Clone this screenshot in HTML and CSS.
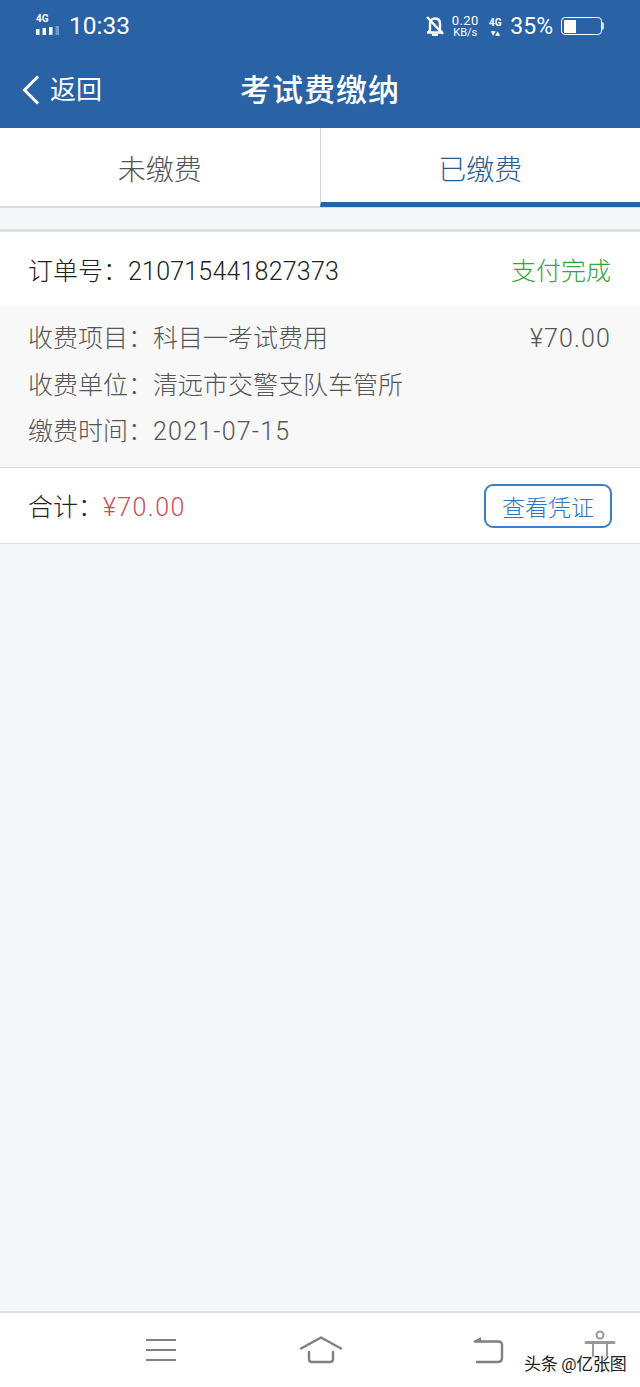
FILE: index.html
```html
<!DOCTYPE html>
<html>
<head>
<meta charset="utf-8">
<link rel="stylesheet" href="styles.css">
</head>
<body>
<div class="page">
	<div class="top">
		<div class="status">
			<div class="signal">
				<span class="net">4G</span>
				<svg class="bars" width="24" height="10" viewBox="0 0 24 10">
					<rect x="0" y="3" width="3.500" height="6" fill="#fff"/>
					<rect x="6.500" y="2" width="3.500" height="7" fill="#fff"/>
					<rect x="13" y="1" width="3.500" height="8" fill="#fff"/>
					<rect x="19.500" y="0" width="3.500" height="9" fill="#6f9bcf"/>
				</svg>
			</div>
			<span class="clock">10:33</span>
			<div class="spacer"></div>
			<svg class="bell" width="20" height="22" viewBox="0 0 20 22">
				<path d="M5 15V8.500C5 5.500 7 3.500 10 3.500S15 5.500 15 8.500V15L17 17.500H3Z" fill="none" stroke="#fff" stroke-width="2.400" stroke-linejoin="round"/>
				<path d="M8 19.800H12" stroke="#fff" stroke-width="2.400" stroke-linecap="round"/>
				<path d="M2 2L18 19" stroke="#fff" stroke-width="2.400"/>
			</svg>
			<div class="speed"><span>0.20</span><span class="unit">KB/s</span></div>
			<div class="net2"><span>4G</span><span class="arrows">▼▲</span></div>
			<span class="percent">35%</span>
			<div class="battery"><div class="level"></div></div>
			<div class="nub"></div>
		</div>
		<div class="navbar">
			<svg class="back" width="20" height="32" viewBox="0 0 20 32">
				<path d="M17 2.500L3.500 16L17 29.500" fill="none" stroke="#fff" stroke-width="3"/>
			</svg>
			<span class="back-text">返回</span>
			<span class="title">考试费缴纳</span>
		</div>
	</div>

	<div class="tabs">
		<div class="tab">未缴费</div>
		<div class="tab active">已缴费</div>
	</div>

	<div class="order">
		<div class="row head">
			<span>订单号：<span class="order-no">210715441827373</span></span>
			<span class="done">支付完成</span>
		</div>
		<div class="detail">
			<div class="line"><span>收费项目：科目一考试费用</span><span class="num">¥70.00</span></div>
			<div class="line"><span>收费单位：清远市交警支队车管所</span></div>
			<div class="line"><span>缴费时间：<span class="num date">2021-07-15</span></span></div>
		</div>
		<div class="row total">
			<span>合计：<span class="money num">¥70.00</span></span>
			<div class="btn">查看凭证</div>
		</div>
	</div>

	<div class="fill"></div>

	<div class="bottom">
		<svg class="menu-ic" width="32" height="26" viewBox="0 0 32 26">
			<path d="M1 3H31M1 13H31M1 23H31" stroke="#808080" stroke-width="2.200"/>
		</svg>
		<svg class="home-ic" width="44" height="28" viewBox="0 0 44 28">
			<path d="M2 12.500L22 1.500L42 12.500" fill="none" stroke="#808080" stroke-width="2.400" stroke-linecap="round" stroke-linejoin="round"/>
			<path d="M10 16V23C10 25 11 26 13 26H31C33 26 34 25 34 23V16" fill="none" stroke="#808080" stroke-width="2.400" stroke-linecap="round"/>
		</svg>
		<svg class="back-ic" width="32" height="28" viewBox="0 0 32 28">
			<path d="M3 5.500H26C29 5.500 30 6.500 30 9V22C30 25 29 26 26 26H5" fill="none" stroke="#808080" stroke-width="2.400" stroke-linecap="round"/>
			<path d="M1 5.500L9 1V6Z" fill="#808080"/>
		</svg>
		<svg class="man-ic" width="32" height="36" viewBox="0 0 32 36">
			<circle cx="16" cy="5" r="3.500" fill="none" stroke="#999" stroke-width="2"/>
			<path d="M2 12.500H30" stroke="#999" stroke-width="3" stroke-linecap="round"/>
			<path d="M9 14V27M23 14V27" stroke="#999" stroke-width="2"/>
		</svg>
		<span class="mark">头条 @亿张图</span>
	</div>
</div>
</body>
</html>
```

FILE: styles.css
```css
* {
	box-sizing: border-box;
}

html, body {
	margin: 0;
	padding: 0;
}

body {
	font-family: "Roboto", "Noto Sans CJK SC", sans-serif;
	font-weight: 300;
	background: #f4f8f9;
}

.page {
	position: relative;
	width: 640px;
	height: 1387px;
	display: flex;
	flex-direction: column;
	overflow: hidden;
}

.top {
	height: 128px;
	background: #2a62a6;
	color: #fff;
}

.status {
	height: 52px;
	padding: 0 36px 0 36px;
	display: flex;
	align-items: center;
}

.signal {
	width: 26px;
	height: 24px;
	display: flex;
	flex-direction: column;
	margin-top: -3px;
}

.net {
	font-size: 10px;
	font-weight: 700;
	line-height: 11px;
}

.bars {
	margin-top: 2px;
}

.clock {
	margin-left: 7px;
	font-size: 24.500px;
	font-weight: 400;
	line-height: 28px;
}

.spacer {
	flex: 1;
}

.bell {
	margin-right: 5px;
}

.speed {
	width: 30px;
	display: flex;
	flex-direction: column;
	align-items: center;
	font-size: 13px;
	font-weight: 400;
	letter-spacing: 0.400px;
	line-height: 12px;
	margin-right: 7px;
}

.unit {
	font-size: 11px;
	letter-spacing: 0;
	line-height: 11px;
}

.net2 {
	width: 16px;
	display: flex;
	flex-direction: column;
	align-items: center;
	font-size: 10px;
	font-weight: 700;
	line-height: 12px;
	margin-right: 7px;
}

.arrows {
	font-family: "DejaVu Sans", sans-serif;
	font-size: 6px;
	line-height: 7px;
	white-space: nowrap;
}

.percent {
	font-size: 23px;
	font-weight: 400;
	margin-right: 8px;
}

.battery {
	width: 41px;
	height: 18px;
	border: 1.500px solid #fff;
	border-radius: 4px;
	padding: 1.500px;
}

.level {
	width: 12px;
	height: 100%;
	background: #fff;
}

.nub {
	width: 2px;
	height: 8px;
	background: #cfdcec;
	border-radius: 0 2px 2px 0;
}

.navbar {
	position: relative;
	height: 76px;
	padding: 0 0 0 21px;
	display: flex;
	align-items: center;
}

.back {
	margin-top: -1px;
}

.back-text {
	margin-left: 9px;
	font-size: 26px;
	font-weight: 400;
	line-height: 30px;
}

.title {
	position: absolute;
	left: 0;
	right: 0;
	top: 21px;
	text-align: center;
	font-size: 31px;
	line-height: 36px;
	letter-spacing: 1px;
	font-weight: 500;
}

.tabs {
	height: 80px;
	display: flex;
	background: #fff;
	border-bottom: 2px solid #d9dcdd;
}

.tab {
	flex: 1;
	display: flex;
	align-items: center;
	justify-content: center;
	padding-top: 2px;
	font-size: 28px;
	color: #555;
}

.tab.active {
	margin-bottom: -1px;
	padding-top: 5px;
	border-left: 1px solid #d4d4d4;
	border-bottom: 5px solid #2a62a6;
	color: #2a5c96;
}

.order {
	margin-top: 21px;
	border-top: 3px solid #dfe3e6;
	border-bottom: 1px solid #dcdcdc;
	background: #fff;
}

.row {
	display: flex;
	align-items: center;
	justify-content: space-between;
	padding: 0 29px 0 28px;
	font-size: 25px;
	color: #222;
}

.head {
	height: 74px;
}

.order-no {
	letter-spacing: 0.200px;
}

.done {
	color: #2fa53b;
}

.detail {
	height: 162px;
	padding: 10px 29px 0 28px;
	background: #f8f8f8;
	border-bottom: 1px solid #d9d9d9;
	color: #555;
	font-size: 25px;
}

.line {
	height: 46.500px;
	line-height: 46px;
	display: flex;
	align-items: baseline;
	justify-content: space-between;
}

.num {
	letter-spacing: 1.100px;
}

.date {
	letter-spacing: 1.200px;
}

.total {
	height: 75px;
	padding-bottom: 2px;
}

.money {
	color: #cf4c52;
	letter-spacing: 1.400px;
}

.btn {
	width: 128px;
	height: 44px;
	margin-right: -1px;
	margin-bottom: -2px;
	border: 2px solid #3a7fc4;
	border-radius: 9px;
	display: flex;
	align-items: center;
	justify-content: center;
	font-size: 23px;
	color: #2f76bf;
}

.fill {
	flex: 1;
}

.bottom {
	position: relative;
	height: 76px;
	background: #fff;
	border-top: 2px solid #dcdfe0;
}

.bottom svg {
	position: absolute;
}

.menu-ic {
	left: 145px;
	top: 24px;
}

.home-ic {
	left: 299px;
	top: 23px;
}

.back-ic {
	left: 472px;
	top: 23px;
}

.man-ic {
	left: 584px;
	top: 17px;
}

.mark {
	position: absolute;
	left: 524px;
	top: 40px;
	font-size: 17px;
	font-weight: 400;
	line-height: 22px;
	letter-spacing: -0.300px;
	color: #222;
	text-shadow: 0 0 2px #fff, 0 0 2px #fff;
	white-space: nowrap;
}
```
